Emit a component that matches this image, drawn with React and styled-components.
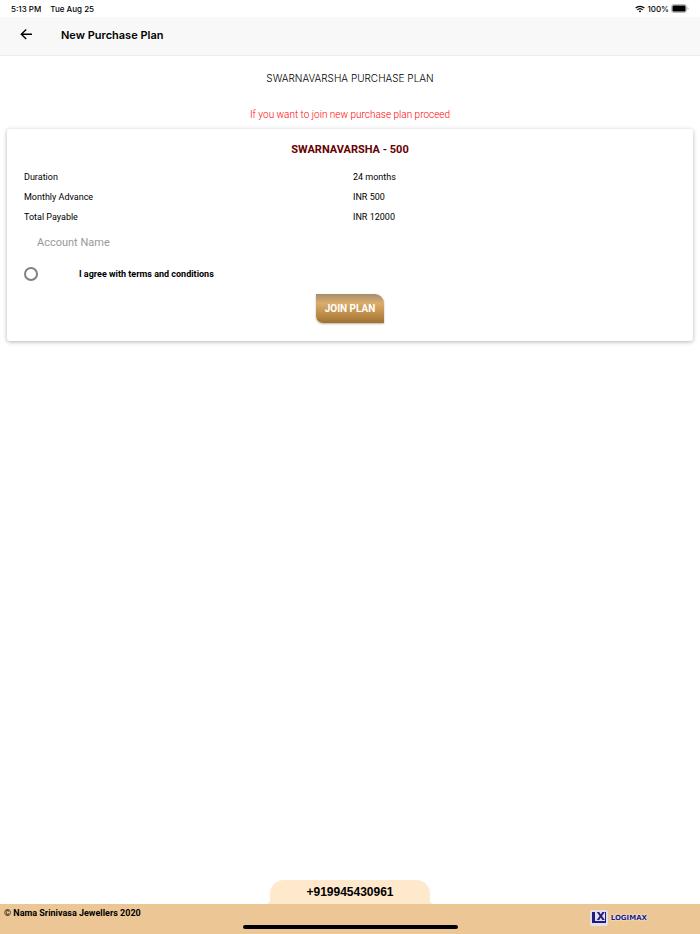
import { useState } from 'react';
import styled, { createGlobalStyle } from 'styled-components';

const plan = {
  name: 'SWARNAVARSHA - 500',
  details: [
    { label: 'Duration', value: '24 months' },
    { label: 'Monthly Advance', value: 'INR 500' },
    { label: 'Total Payable', value: 'INR 12000' },
  ],
};

function App() {
  const [account, setAccount] = useState('');
  const [agreed, setAgreed] = useState(false);

  return (
    <Page>
      <GlobalStyle />
      <StatusBar>
        <StatusGroup $gap="9px">
          <span>5:13 PM</span>
          <span>Tue Aug 25</span>
        </StatusGroup>
        <StatusGroup $gap="2px">
          <WifiIcon />
          <span>100%</span>
          <BatteryIcon />
        </StatusGroup>
      </StatusBar>
      <Header>
        <BackButton type="button" aria-label="Back">
          <ArrowIcon />
        </BackButton>
        <HeaderTitle>New Purchase Plan</HeaderTitle>
      </Header>
      <Content>
        <PlanTitle>SWARNAVARSHA PURCHASE PLAN</PlanTitle>
        <Notice>If you want to join new purchase plan proceed</Notice>
        <Card onSubmit={(e) => e.preventDefault()}>
          <CardTitle>{plan.name}</CardTitle>
          <Details>
            {plan.details.map(({ label, value }) => (
              <DetailRow key={label}>
                <dt>{label}</dt>
                <dd>{value}</dd>
              </DetailRow>
            ))}
          </Details>
          <AccountInput
            aria-label="Account Name"
            placeholder="Account Name"
            value={account}
            onChange={(e) => setAccount(e.target.value)}
          />
          <Agreement>
            <AgreeBox
              type="checkbox"
              checked={agreed}
              onChange={(e) => setAgreed(e.target.checked)}
            />
            I agree with terms and conditions
          </Agreement>
          <JoinButton type="submit">JOIN PLAN</JoinButton>
        </Card>
      </Content>
      <PhoneTab href="tel:+919945430961">+919945430961</PhoneTab>
      <Footer>
        <Copyright>© Nama Srinivasa Jewellers 2020</Copyright>
        <Brand>
          <LogoMark />
          <BrandName>LOGIMAX</BrandName>
        </Brand>
        <HomeIndicator />
      </Footer>
    </Page>
  );
}

const GlobalStyle = createGlobalStyle`
  * {
    box-sizing: border-box;
  }

  body {
    margin: 0;
    background: #fff;
    color: #000;
    font-family: Roboto, sans-serif;
    font-size: 9px;
  }
`;

const Page = styled.div`
  display: flex;
  flex-direction: column;
  min-height: 100vh;
`;

const StatusBar = styled.div`
  display: flex;
  align-items: center;
  justify-content: space-between;
  height: 17px;
  padding: 0 11px;
  font-family: Inter, sans-serif;
  font-size: 8px;
  font-weight: 500;
`;

const StatusGroup = styled.div`
  display: flex;
  align-items: center;
  gap: ${({ $gap }) => $gap};
`;

const Header = styled.header`
  display: flex;
  align-items: center;
  gap: 28px;
  height: 39px;
  padding: 0 19px 3px;
  background: #f8f8f8;
  border-bottom: 1px solid #ececec;
`;

const BackButton = styled.button`
  display: flex;
  padding: 0;
  border: none;
  background: none;
  color: inherit;
`;

const HeaderTitle = styled.h1`
  margin: 0;
  font-family: Inter, sans-serif;
  font-size: 11px;
  font-weight: 600;
  line-height: 14px;
`;

const Content = styled.main`
  flex: 1;
  padding: 14px 7px;
`;

const PlanTitle = styled.h2`
  margin: 0;
  font-family: Inter, sans-serif;
  font-size: 10px;
  font-weight: 300;
  line-height: 16px;
  text-align: center;
`;

const Notice = styled.p`
  margin: 21px 0 6px;
  color: #ff0000;
  font-size: 10px;
  font-weight: 300;
  line-height: 16px;
  text-align: center;
`;

const Card = styled.form`
  display: flex;
  flex-direction: column;
  padding: 13px 17px 18px;
  border-radius: 3px;
  background: #fff;
  box-shadow: 0 1px 4px rgba(0, 0, 0, 0.3);
`;

const CardTitle = styled.h3`
  margin: 0 0 9px;
  color: #660000;
  font-size: 11px;
  font-weight: 700;
  line-height: 16px;
  text-align: center;
`;

const Details = styled.dl`
  margin: 0;
`;

const DetailRow = styled.div`
  display: grid;
  grid-template-columns: 1fr 1fr;
  column-gap: 6px;
  line-height: 20px;

  dd {
    margin: 0;
  }
`;

const AccountInput = styled.input`
  height: 24px;
  margin: 3px 0 0;
  padding: 0 13px;
  border: none;
  outline: none;
  background: none;
  font-family: inherit;
  font-size: 11px;

  &::placeholder {
    color: #999;
  }
`;

const Agreement = styled.label`
  display: flex;
  align-items: center;
  gap: 41px;
  height: 40px;
  font-weight: 700;
`;

const AgreeBox = styled.input`
  appearance: none;
  width: 14px;
  height: 14px;
  margin: 0;
  border: 2px solid #808080;
  border-radius: 50%;

  &:checked {
    background: #c08f48;
  }
`;

const JoinButton = styled.button`
  align-self: center;
  height: 29px;
  padding: 0 9px;
  border: none;
  border-radius: 0 9px 0 7px;
  background: linear-gradient(#a58d6f, #dbad6b 32%, #c69550 60%, #a07130);
  box-shadow: 0 1px 2px rgba(0, 0, 0, 0.3);
  color: #fff;
  font-family: inherit;
  font-size: 10px;
  font-weight: 700;
`;

const PhoneTab = styled.a`
  position: relative;
  align-self: center;
  width: 160px;
  border-radius: 14px 14px 0 0;
  background: #ffe9cc;
  color: #000;
  font-family: 'Liberation Sans', sans-serif;
  font-size: 12px;
  font-weight: 700;
  line-height: 24px;
  text-align: center;
  text-decoration: none;

  &::before,
  &::after {
    content: '';
    position: absolute;
    bottom: 0;
    width: 4px;
    height: 4px;
  }

  &::before {
    right: 100%;
    background: radial-gradient(circle at 0 0, transparent 4px, #ffe9cc 4px);
  }

  &::after {
    left: 100%;
    background: radial-gradient(circle at 100% 0, transparent 4px, #ffe9cc 4px);
  }
`;

const Footer = styled.footer`
  position: relative;
  display: flex;
  justify-content: space-between;
  height: 30px;
  padding: 3px 53px 0 4px;
  background: #ecc795;
`;

const Copyright = styled.span`
  font-weight: 700;
  line-height: 12px;
`;

const Brand = styled.div`
  display: flex;
  align-items: center;
  gap: 3px;
  height: 21px;
`;

const BrandName = styled.span`
  color: #211a80;
  font-family: 'DejaVu Sans', sans-serif;
  font-size: 7px;
  font-weight: 700;
  text-shadow: 0 0 1px #fff, 0 0 2px #fff;
`;

const HomeIndicator = styled.div`
  position: absolute;
  bottom: 5px;
  left: 50%;
  width: 215px;
  height: 4px;
  margin-left: -107px;
  border-radius: 2px;
  background: #000;
`;

const ArrowIcon = () => (
  <svg width="14" height="14" viewBox="0 0 14 14" fill="none" stroke="currentColor" strokeWidth="1.4">
    <path d="M13 6.300H2.700M7.200 1.500 2.300 6.300l4.900 4.800" />
  </svg>
);

const WifiIcon = () => (
  <svg width="10" height="8" viewBox="0 0 10 8" fill="none" stroke="currentColor" strokeWidth="1.3">
    <path d="M.6 3.1a6.3 6.3 0 0 1 8.8 0M2.3 4.9a3.9 3.9 0 0 1 5.4 0" />
    <path d="M3.7 6.2a1.9 1.9 0 0 1 2.6 0L5 7.6Z" fill="currentColor" stroke="none" />
  </svg>
);

const BatteryIcon = () => (
  <svg width="18" height="9" viewBox="0 0 18 9">
    <rect x=".5" y=".5" width="15" height="8" rx="2.2" fill="#ddd" stroke="#bbb" />
    <rect x="1.5" y="1.5" width="13" height="6" rx="1.2" />
    <path d="M16.5 3v3q1-.4 1-1.5t-1-1.5" fill="#aaa" />
  </svg>
);

const LogoMark = () => (
  <svg width="18" height="16" viewBox="0 0 18 16">
    <rect width="18" height="16" rx="2" fill="#e2dfe6" />
    <path d="M2 2h3v9h10.500v2H2Z" fill="#211a80" />
    <path d="M6.800 2h2.400l1.600 2.500L12.400 2h2.400L12 6l2.800 4h-2.400l-1.600-2.500L9.200 10H6.800L9.600 6Z" fill="#211a80" />
    <path d="M15.500 2v11" stroke="#211a80" strokeWidth="1" />
  </svg>
);

export default App;
